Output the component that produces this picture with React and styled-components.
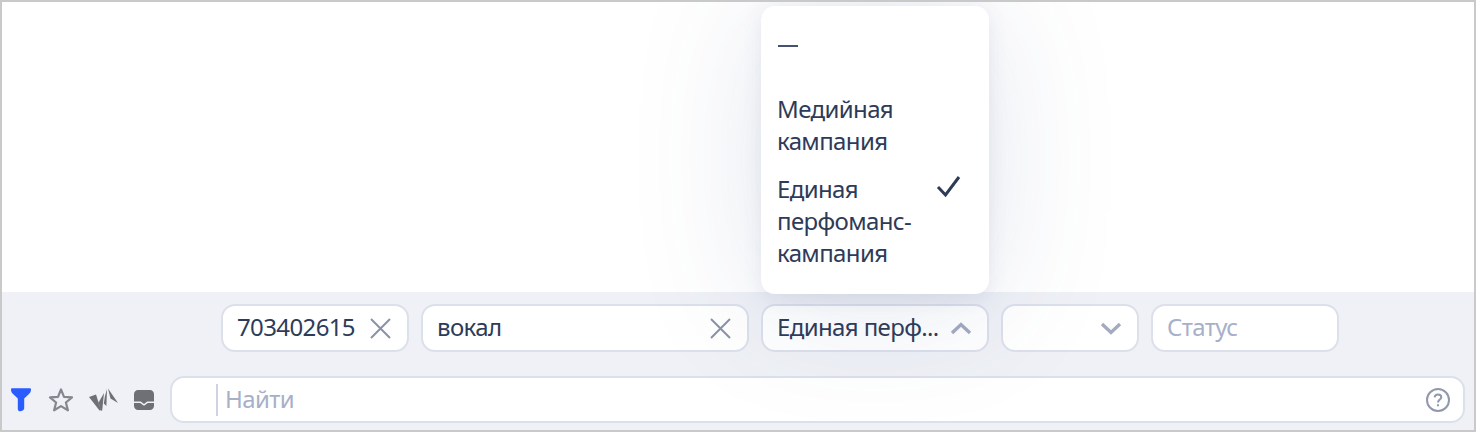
import React from "react";
import styled, { createGlobalStyle } from "styled-components";

const Global = createGlobalStyle`
  html, body { margin: 0; padding: 0; background: #fff; }
  body { font-family: "Noto Sans", "Open Sans", sans-serif; letter-spacing: -0.62px; }
`;

const Frame = styled.div`
  position: relative;
  box-sizing: border-box;
  width: 1476px;
  height: 432px;
  border: 2px solid #c9c9c9;
  display: flex;
  flex-direction: column;
  overflow: hidden;
  background: #fff;
`;
const Blank = styled.div`
  height: 290px;
  flex: none;
`;
const Panel = styled.div`
  flex: 1;
  background: #eff1f6;
  display: flex;
  flex-direction: column;
`;
const FilterRow = styled.div`
  display: flex;
  gap: 12px;
  padding: 12px 0 0 219px;
`;
const Pill = styled.div`
  box-sizing: border-box;
  width: ${(p) => p.$w}px;
  height: 48px;
  display: flex;
  align-items: center;
  justify-content: space-between;
  padding: 0 ${(p) => p.$pr ?? 14}px 0 14px;
  background: #fff;
  border: 2px solid #dce0eb;
  border-radius: 14px;
  font-size: 24px;
  line-height: 32px;
  color: #2e3b58;
  white-space: nowrap;
`;
const Label = styled.span`
  margin-top: -2px;
  color: ${(p) => (p.$muted ? "#a8b0c8" : "#2e3b58")};
`;
const SearchRow = styled.div`
  display: flex;
  align-items: center;
  padding: 24px 9px 0 8px;
`;
const Tools = styled.div`
  display: flex;
  align-items: center;
  gap: 15px;
  width: 160px;
  flex: none;
`;
const Search = styled.div`
  box-sizing: border-box;
  flex: 1;
  height: 47px;
  display: flex;
  align-items: center;
  padding: 0 13px 0 44px;
  background: #fff;
  border: 2px solid #dce0eb;
  border-radius: 14px;
  font-size: 24px;
  line-height: 32px;
`;
const Caret = styled.div`
  width: 2px;
  height: 32px;
  background: #cdd3e2;
  margin-right: 7px;
  flex: none;
`;
const Grow = styled.div`
  flex: 1;
`;
const Menu = styled.div`
  position: absolute;
  left: 759px;
  top: 4px;
  box-sizing: border-box;
  width: 228px;
  height: 288px;
  padding: 22px 16px 0;
  background: #fff;
  border-radius: 14px;
  box-shadow: 0 4px 20px rgba(70, 85, 140, 0.1), 0 8px 130px rgba(70, 85, 140, 0.15);
  color: #2e3b58;
  font-size: 24px;
  line-height: 32px;
`;
const Item = styled.div`
  position: relative;
  margin-bottom: ${(p) => p.$mb}px;
  width: 150px;
`;
const Dash = styled.div`
  width: 20px;
  height: 2px;
  margin: 17px 0 46px 1px;
  background: #46536f;
`;
const Check = styled.svg`
  position: absolute;
  left: 158px;
  top: 0;
`;
const Inbox = styled.svg`
  margin-left: 1px;
`;

const X = () => (
  <svg width="24" height="24" viewBox="0 0 24 24" fill="none" stroke="#8a92a8" strokeWidth="2">
    <path d="M3 3L22 22M22 3L3 22" />
  </svg>
);
const Chev = ({ up }) => (
  <svg width="24" height="24" viewBox="0 0 24 24" fill="none" stroke="#a3abc0" strokeWidth="3.4">
    <path d={up ? "M3 17L12 8.5L21 17" : "M3 8L12 16.5L21 8"} />
  </svg>
);

export default function App() {
  return (
    <Frame>
      <Global />
      <Blank />
      <Panel>
        <FilterRow>
          <Pill $w={188} $pr={15}><Label>703402615</Label><X /></Pill>
          <Pill $w={328} $pr={15}><Label>вокал</Label><X /></Pill>
          <Pill $w={228}><Label>Единая перф...</Label><Chev up /></Pill>
          <Pill $w={138}><span /><Chev /></Pill>
          <Pill $w={188}><Label $muted>Статус</Label></Pill>
        </FilterRow>
        <SearchRow>
          <Tools>
            <svg width="22" height="24" viewBox="0 0 22 24">
              <path d="M1 1.5C1 .8 1.6.3 2.2.3H19.8C20.5.3 21 .8 21 1.5C21 3.8 20 5.2 18.2 6.8L14.2 10.5V20.5C14.2 22.6 10 24 8.8 22.9C8.2 22.4 7.8 21.8 7.8 20.8V10.5L3.8 6.8C2 5.2 1 3.8 1 1.5Z" fill="#2a5cff" />
            </svg>
            <svg width="26" height="26" viewBox="0 0 26 26" fill="none" stroke="#85878f" strokeWidth="2.2" strokeLinejoin="round">
              <path d="M14 2.5L17 9.8L25 10.4L18.9 15.5L20.9 23.3L14 19.1L7.1 23.3L9.1 15.5L3 10.4L11 9.8Z" />
            </svg>
            <svg width="30" height="24" viewBox="0 0 30 24" fill="#6f7076">
              <path d="M1 9L8 6.5L13 22L11.5 22.5Z" />
              <path d="M16 5L14.2 22.5L12.8 22.8L10.6 14.5Z" />
              <path d="M19 1L18.4 18L15.8 15.5L17 8Z" />
              <path d="M20 0.5L30 15L22.5 10.5Z" />
            </svg>
            <Inbox width="20" height="20" viewBox="0 0 20 20">
              <path d="M4 0H16C18.2 0 20 1.8 20 4V11.5H13.2L10 14L6.8 11.5H0V4C0 1.8 1.8 0 4 0Z" fill="#6f7076" />
              <path d="M0 13H6.2L10 15.8L13.8 13H20V16C20 18.2 18.2 20 16 20H4C1.8 20 0 18.2 0 16Z" fill="#6f7076" />
            </Inbox>
          </Tools>
          <Search>
            <Caret />
            <Label $muted>Найти</Label>
            <Grow />
            <svg width="24" height="24" viewBox="0 0 24 24" fill="none" stroke="#9098ae" strokeWidth="2">
              <circle cx="12" cy="12" r="11" />
              <path d="M8.6 9.3C8.8 7.4 10.2 6.4 12 6.4C13.9 6.4 15.3 7.6 15.3 9.2C15.3 11.4 12 11.6 12 14.4" />
              <path d="M12 16.2V18.2" />
            </svg>
          </Search>
        </SearchRow>
      </Panel>
      <Menu>
        <Dash />
        <Item $mb={16}>Медийная кампания</Item>
        <Item $mb={0}>
          Единая перфоманс-кампания
          <Check width="28" height="28" viewBox="0 0 28 28" fill="none" stroke="#2e3b58" strokeWidth="3">
            <path d="M3 14L10.5 22L24 4" />
          </Check>
        </Item>
      </Menu>
    </Frame>
  );
}
